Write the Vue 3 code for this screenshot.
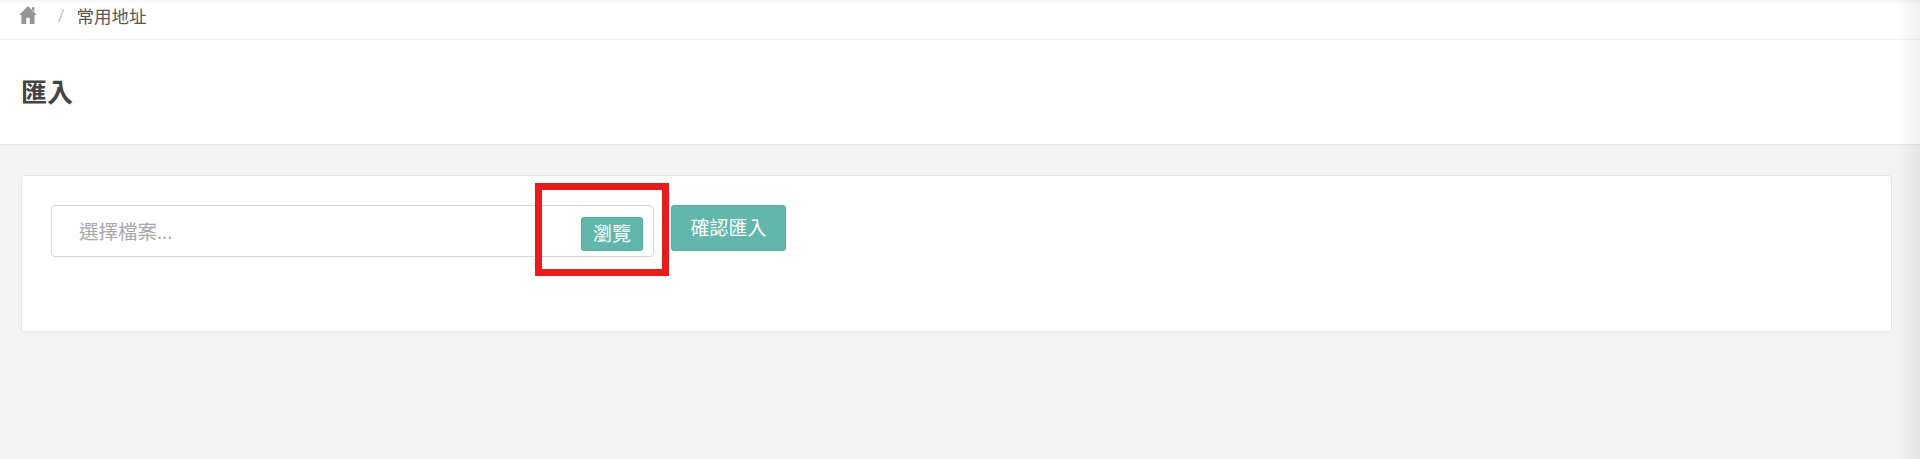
<template>
  <div class="page">
    <nav class="breadcrumb">
      <svg class="breadcrumb__home" viewBox="0 0 18 16" width="18" height="18" preserveAspectRatio="none">
        <path fill="#949494" d="M9 0 L18 8 L15.6 8 L15.6 16 L10.8 16 L10.8 10.5 L7.2 10.5 L7.2 16 L2.4 16 L2.4 8 L0 8 Z M13 1 L15.4 1 L15.4 5 L13 3 Z" />
      </svg>
      <span class="breadcrumb__sep">/</span>
      <span class="breadcrumb__item">常用地址</span>
    </nav>

    <header class="page-title">
      <h1 class="page-title__text">匯入</h1>
    </header>

    <main class="content">
      <section class="card">
        <div class="file-row">
          <div class="file-input">
            <span class="file-input__placeholder">選擇檔案...</span>
            <button class="btn btn--small" type="button">瀏覽</button>
          </div>
          <button class="btn btn--confirm" type="button">確認匯入</button>
        </div>
      </section>
    </main>

    <div class="highlight"></div>
    <div class="edge-shadow"></div>
  </div>
</template>

<script setup>
</script>

<style>
html,
body {
  margin: 0;
  background: #f3f3f3;
}
</style>

<style scoped>
.page {
  position: relative;
  height: 459px;
  overflow: hidden;
  background: #f3f3f3;
  color: #555;
  font-family: "Open Sans", "Liberation Sans", "Noto Sans CJK TC", sans-serif;
}

.breadcrumb {
  display: flex;
  align-items: center;
  height: 40px;
  padding: 0 0 9px 19px;
  box-sizing: border-box;
  background: linear-gradient(#f6f6f6, #fff 5px);
  border-bottom: 1px solid #f3f3f3;
  font-size: 17.5px;
}

.breadcrumb__home {
  display: block;
}

.breadcrumb__sep {
  margin-left: 21px;
  color: #c4c4c4;
}

.breadcrumb__item {
  margin-left: 12px;
  color: #555;
}

.page-title {
  display: flex;
  align-items: center;
  height: 105px;
  padding: 0 21px 2px;
  box-sizing: border-box;
  background: #fff;
  border-bottom: 1px solid #e7e7e7;
}

.page-title__text {
  margin: 0;
  font-size: 26px;
  font-weight: 700;
  color: #444;
}

.content {
  padding: 30px 28px 0 21px;
}

.card {
  height: 157px;
  box-sizing: border-box;
  padding: 29px 29px 0;
  background: #fff;
  border: 1px solid #e5e5e5;
  border-radius: 3px;
}

.file-row {
  display: flex;
  align-items: flex-start;
  gap: 17px;
}

.file-input {
  display: flex;
  align-items: center;
  justify-content: space-between;
  width: 603px;
  height: 52px;
  box-sizing: border-box;
  padding: 6px 10px 0 27px;
  border: 1px solid #d8d8d8;
  border-radius: 4px;
}

.file-input__placeholder {
  margin-top: -8px;
  font-size: 19.5px;
  color: #a8a8a8;
}

.btn {
  padding: 0 0 2px;
  background: #61b7ab;
  border: 1px solid #55a99d;
  border-radius: 3px;
  color: #fff;
  font-family: inherit;
}

.btn--small {
  width: 62px;
  height: 34px;
  font-size: 19px;
}

.btn--confirm {
  width: 115px;
  height: 46px;
  font-size: 19px;
}

.highlight {
  position: absolute;
  left: 535px;
  top: 183px;
  width: 134px;
  height: 93px;
  box-sizing: border-box;
  border: 7px solid #e81c1c;
}

.edge-shadow {
  position: absolute;
  top: 0;
  right: 0;
  bottom: 0;
  width: 22px;
  background: linear-gradient(to right, rgba(0, 0, 0, 0), rgba(0, 0, 0, 0.06));
}
</style>
